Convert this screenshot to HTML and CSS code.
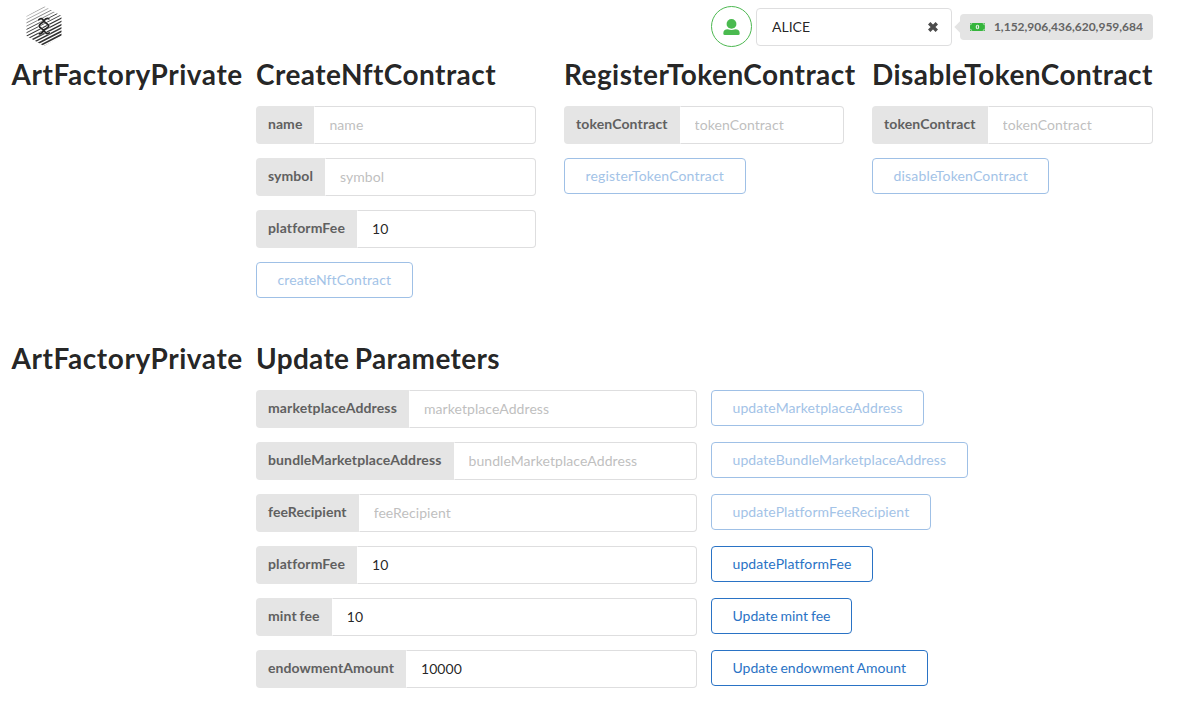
FILE: index.html
```html
<!DOCTYPE html>
<html lang="en">
<head>
<meta charset="utf-8">
<title>ArtFactoryPrivate</title>
<link rel="stylesheet" href="styles.css">
</head>
<body>
<header class="topbar">
  <svg class="logo" viewBox="0 0 36 40" width="36" height="40">
    <defs><clipPath id="hex"><path d="M18 0L35.500 10V30L18 40L.500 30V10z"/></clipPath></defs>
    <g clip-path="url(#hex)" stroke="#333" fill="none">
      <path stroke-width=".4" d="M0 10.500L36 -8M0 13.800L36 -4.700"/>
      <path stroke-width=".6" d="M0 17.100L36 -1.400M0 20.400L36 1.900"/>
      <path stroke-width=".9" d="M0 23.700L36 5.200M0 27L36 8.500"/>
      <path stroke-width="1.100" d="M0 30.300L36 11.800M0 33.600L36 15.100"/>
      <path stroke-width="1.400" d="M0 36.900L36 18.400M0 40.200L36 21.700"/>
      <path stroke-width="1.600" d="M0 43.500L36 25M0 46.800L36 28.300M0 50.100L36 31.600M0 53.400L36 34.900"/>
    </g>
    <g fill="none" stroke-linecap="round">
      <path stroke="#fff" stroke-opacity=".5" stroke-width="3" d="M12.800 13.800C14.500 11.800 16.500 12.500 17.500 14.500C18.500 17 22.500 17.500 22.800 19.800M22.800 12.800C20 11.500 18.500 14 17.500 15.500C16 17.500 13.500 17.500 13.200 19.800C13.200 22.500 17.500 22.500 18.500 25C19.500 27.500 21.500 28.200 23.200 26.800M22.800 19.800C22.500 22.500 18.500 22.500 17.500 24.500C16.500 26.500 15.500 28.500 13.200 27.600"/>
      <path stroke="#222" stroke-width="1.700" d="M12.800 13.800C14.500 11.800 16.500 12.500 17.500 14.500C18.500 17 22.500 17.500 22.800 19.800M22.800 12.800C20 11.500 18.500 14 17.500 15.500C16 17.500 13.500 17.500 13.200 19.800C13.200 22.500 17.500 22.500 18.500 25C19.500 27.500 21.500 28.200 23.200 26.800M22.800 19.800C22.500 22.500 18.500 22.500 17.500 24.500C16.500 26.500 15.500 28.500 13.200 27.600"/>
    </g>
  </svg>
  <div class="account">
    <span class="avatar">
      <svg viewBox="0 0 17 16" width="17" height="16"><g fill="currentColor"><circle cx="8.500" cy="4.900" r="4.900"/><path d="M4.800 10.300Q8.500 11.800 12.200 10.300Q16.700 10.300 16.700 14.500Q16.700 16 15.200 16H1.800Q.3 16 .3 14.500Q.3 10.300 4.800 10.300z"/></g></svg>
    </span>
    <div class="dropdown">
      <span>ALICE</span>
      <svg class="clear" viewBox="0 0 10 10" width="10" height="10"><path stroke="currentColor" stroke-width="3.400" d="M1.200 1.200L8.800 8.800M8.800 1.200L1.200 8.800"/></svg>
    </div>
    <div class="balance">
      <svg viewBox="0 0 15 8" width="15" height="8"><rect width="15" height="8" rx=".5" fill="#35b53c"/><path d="M0 1.800Q1.800 1.800 1.800 0M13.200 0Q13.200 1.800 15 1.800M0 6.200Q1.800 6.200 1.800 8M13.200 8Q13.200 6.200 15 6.200" fill="none" stroke="#d4ead4" stroke-width=".7"/><ellipse cx="7.500" cy="4" rx="1.800" ry="2.300" fill="#e3efe3"/><path d="M7.500 2.700V5.300" stroke="#35b53c" stroke-width=".9"/></svg>
      <span>1,152,906,436,620,959,684</span>
    </div>
  </div>
</header>
<main>
  <section class="panel create">
    <h1 class="brand">ArtFactoryPrivate</h1>
    <div class="column">
      <h1>CreateNftContract</h1>
      <label class="field"><span class="tag short">name</span><input placeholder="name"></label>
      <label class="field"><span class="tag short">symbol</span><input placeholder="symbol"></label>
      <label class="field"><span class="tag">platformFee</span><input value="10"></label>
      <button class="btn" disabled>createNftContract</button>
    </div>
    <div class="column">
      <h1>RegisterTokenContract</h1>
      <label class="field"><span class="tag">tokenContract</span><input placeholder="tokenContract"></label>
      <button class="btn token" disabled>registerTokenContract</button>
    </div>
    <div class="column">
      <h1>DisableTokenContract</h1>
      <label class="field"><span class="tag">tokenContract</span><input placeholder="tokenContract"></label>
      <button class="btn token" disabled>disableTokenContract</button>
    </div>
  </section>
  <section class="panel update">
    <h1 class="brand">ArtFactoryPrivate</h1>
    <div class="column">
      <h1 class="words">Update Parameters</h1>
      <div class="row"><label class="field"><span class="tag">marketplaceAddress</span><input placeholder="marketplaceAddress"></label><button class="btn" disabled>updateMarketplaceAddress</button></div>
      <div class="row"><label class="field"><span class="tag">bundleMarketplaceAddress</span><input placeholder="bundleMarketplaceAddress"></label><button class="btn" disabled>updateBundleMarketplaceAddress</button></div>
      <div class="row"><label class="field"><span class="tag short">feeRecipient</span><input placeholder="feeRecipient"></label><button class="btn" disabled>updatePlatformFeeRecipient</button></div>
      <div class="row"><label class="field"><span class="tag">platformFee</span><input value="10"></label><button class="btn">updatePlatformFee</button></div>
      <div class="row"><label class="field"><span class="tag">mint fee</span><input value="10"></label><button class="btn phrase">Update mint fee</button></div>
      <div class="row"><label class="field"><span class="tag short">endowmentAmount</span><input value="10000"></label><button class="btn phrase">Update endowment Amount</button></div>
    </div>
  </section>
</main>
</body>
</html>
```
FILE: styles.css
```css
* { box-sizing: border-box; }
body {
  margin: 0;
  background: #fff;
  color: rgba(0, 0, 0, .87);
  font: 14px/1.4285 Lato, sans-serif;
}
.topbar {
  display: flex;
  justify-content: space-between;
  height: 56px;
  padding: 6px 27px 0 26px;
}
.account { display: flex; align-items: flex-start; }
.avatar {
  display: flex;
  align-items: center;
  justify-content: center;
  width: 41px;
  height: 41px;
  margin-right: 4px;
  border: 1px solid #4db851;
  border-radius: 50%;
  color: #4aba4f;
}
.dropdown {
  display: flex;
  align-items: center;
  justify-content: space-between;
  width: 196px;
  height: 38px;
  margin: 2px 8px 0 0;
  padding: 0 13px 0 15px;
  border: 1px solid #dededf;
  border-radius: 4px;
}
.clear { color: #4c4c4c; }
.balance {
  position: relative;
  display: flex;
  align-items: center;
  gap: 9px;
  width: 193px;
  height: 26px;
  margin-top: 8px;
  padding: 0 10px;
  border-radius: 4px;
  background: #e4e4e4;
  color: #656565;
  font-size: 12px;
  font-weight: 700;
  line-height: 12px;
}
.balance::before {
  content: "";
  position: absolute;
  top: 9px;
  left: -4px;
  width: 8px;
  height: 8px;
  background: #e4e4e4;
  transform: rotate(45deg);
}
h1 {
  margin: 0;
  font-size: 28px;
  line-height: 36px;
  font-weight: 700;
  letter-spacing: .43px;
  white-space: nowrap;
}
.brand { letter-spacing: .57px; }
.words { letter-spacing: .33px; word-spacing: -1.8px; }
.panel { display: grid; padding-left: 11.5px; }
.create {
  grid-template-columns: 216.5px 280px 280px 281px;
  column-gap: 28px;
  height: 284px;
}
.update { grid-template-columns: 244.5px 1fr; }
.column {
  display: flex;
  flex-direction: column;
  align-items: flex-start;
  gap: 14px;
}
.field {
  display: flex;
  width: 100%;
  height: 38px;
}
.tag {
  padding: 11px 12px 0;
  border-radius: 4px 0 0 4px;
  background: #e5e5e5;
  color: #606060;
  font-weight: 700;
  line-height: 14px;
  letter-spacing: .13px;
  word-spacing: -.8px;
  white-space: nowrap;
}
.tag.short { letter-spacing: .06px; }
input {
  flex: 1;
  min-width: 0;
  padding: 0 14px 2px;
  border: 1px solid #dededf;
  border-left-color: transparent;
  border-radius: 0 4px 4px 0;
  background: #fff;
  color: rgba(0, 0, 0, .87);
  font: 14px/17px Lato, sans-serif;
  letter-spacing: .07px;
}
input::placeholder { color: #bfbfbf; }
.row { display: flex; gap: 14px; }
.row .field { width: 441px; }
.btn {
  height: 36px;
  padding: 0 20.5px;
  border: 1px solid #2a73c5;
  border-radius: 4px;
  background: #fff;
  color: #2a73c5;
  font: 14px/14px Lato, sans-serif;
  letter-spacing: .1px;
  white-space: nowrap;
}
.btn.token { letter-spacing: .17px; }
.btn.phrase { letter-spacing: .02px; word-spacing: -.8px; }
.btn:disabled { border-color: #9fc0e6; color: #a3c3e7; }
```
